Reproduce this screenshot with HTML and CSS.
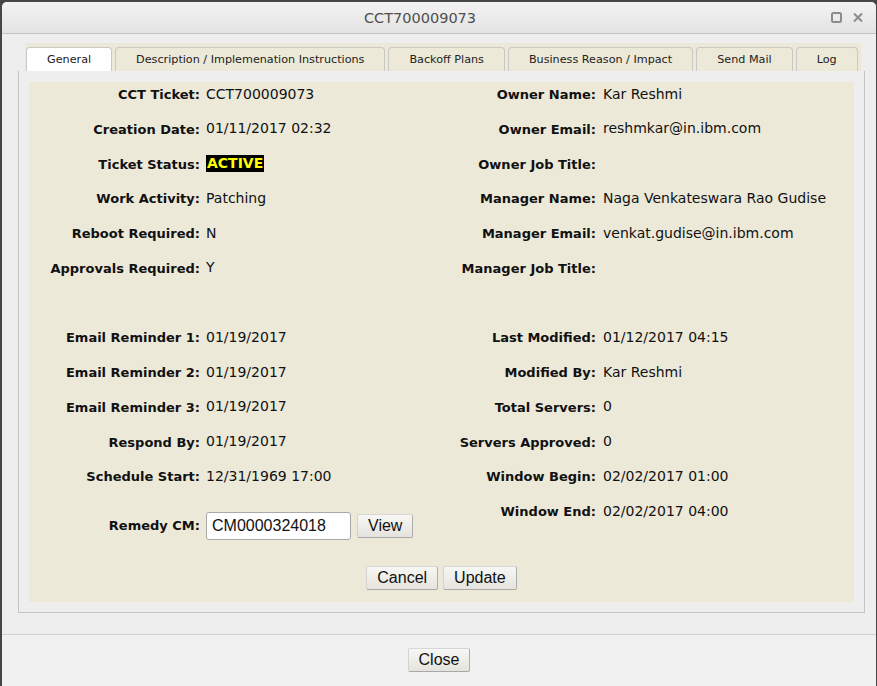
FILE: index.html
```html
<!DOCTYPE html>
<html>
<head>
<meta charset="utf-8">
<link rel="stylesheet" href="styles.css">
</head>
<body>
<div class="dialog">
  <div class="titlebar">
    <div class="title">CCT700009073</div>
    <div class="wincontrols">
      <svg class="ico" width="11" height="11" viewBox="0 0 11 11"><rect x="1" y="1" width="9" height="9" rx="1.5" fill="none" stroke="#8c8c8c" stroke-width="2"/></svg>
      <svg class="ico" width="10" height="11" viewBox="0 0 10 11"><path d="M1 1.5 L9 9.5 M9 1.5 L1 9.5" stroke="#8c8c8c" stroke-width="2" fill="none"/></svg>
    </div>
  </div>
  <div class="body">
    <div class="tabs">
      <ul class="tabnav">
        <li class="tab active">General</li>
        <li class="tab">Description / Implemenation Instructions</li>
        <li class="tab">Backoff Plans</li>
        <li class="tab">Business Reason / Impact</li>
        <li class="tab">Send Mail</li>
        <li class="tab">Log</li>
      </ul>
      <div class="panel">
        <div class="content">
          <div class="cols">
            <div class="grid left">
              <div class="lbl">CCT Ticket:</div><div class="val">CCT700009073</div>
              <div class="lbl">Creation Date:</div><div class="val">01/11/2017 02:32</div>
              <div class="lbl">Ticket Status:</div><div class="val"><span class="status">ACTIVE</span></div>
              <div class="lbl">Work Activity:</div><div class="val">Patching</div>
              <div class="lbl">Reboot Required:</div><div class="val">N</div>
              <div class="lbl">Approvals Required:</div><div class="val">Y</div>
              <div class="spacer"></div>
              <div class="lbl">Email Reminder 1:</div><div class="val">01/19/2017</div>
              <div class="lbl">Email Reminder 2:</div><div class="val">01/19/2017</div>
              <div class="lbl">Email Reminder 3:</div><div class="val">01/19/2017</div>
              <div class="lbl">Respond By:</div><div class="val">01/19/2017</div>
              <div class="lbl">Schedule Start:</div><div class="val">12/31/1969 17:00</div>
              <div class="lbl remedy-lbl">Remedy CM:</div>
              <div class="remedy-field">
                <input class="txt" type="text" value="CM0000324018">
                <button class="btn">View</button>
              </div>
            </div>
            <div class="grid right">
              <div class="lbl">Owner Name:</div><div class="val">Kar Reshmi</div>
              <div class="lbl">Owner Email:</div><div class="val">reshmkar@in.ibm.com</div>
              <div class="lbl">Owner Job Title:</div><div class="val"></div>
              <div class="lbl">Manager Name:</div><div class="val">Naga Venkateswara Rao Gudise</div>
              <div class="lbl">Manager Email:</div><div class="val">venkat.gudise@in.ibm.com</div>
              <div class="lbl">Manager Job Title:</div><div class="val"></div>
              <div class="spacer"></div>
              <div class="lbl">Last Modified:</div><div class="val">01/12/2017 04:15</div>
              <div class="lbl">Modified By:</div><div class="val">Kar Reshmi</div>
              <div class="lbl">Total Servers:</div><div class="val">0</div>
              <div class="lbl">Servers Approved:</div><div class="val">0</div>
              <div class="lbl">Window Begin:</div><div class="val">02/02/2017 01:00</div>
              <div class="lbl">Window End:</div><div class="val">02/02/2017 04:00</div>
            </div>
          </div>
          <div class="actions">
            <button class="btn">Cancel</button>
            <button class="btn">Update</button>
          </div>
        </div>
      </div>
    </div>
  </div>
  <div class="footer">
    <button class="btn">Close</button>
  </div>
</div>
</body>
</html>
```
FILE: styles.css
```css
html, body {
  margin: 0;
  padding: 0;
}
body {
  width: 877px;
  height: 686px;
  overflow: hidden;
  background: #464646;
  font-family: "DejaVu Sans", sans-serif;
  color: #111;
}
.dialog {
  margin: 2px 0 0 2px;
  width: 874px;
  height: 684px;
  background: #eeeeee;
  border-radius: 5px 5px 0 0;
  display: flex;
  flex-direction: column;
  overflow: hidden;
}
.titlebar {
  height: 31px;
  flex: none;
  border-bottom: 1px solid #c4c4c4;
  background: linear-gradient(#f3f3f3, #e3e3e3);
  display: flex;
  align-items: center;
}
.title {
  flex: 1;
  text-align: center;
  font-size: 14.5px;
  color: #4f4f4f;
  padding-left: 7px;
}
.wincontrols {
  display: flex;
  align-items: center;
  gap: 11px;
  padding-right: 13px;
}
.ico {
  display: block;
}
.body {
  flex: 1;
  padding: 9px 0 0 16px;
}
.tabs {
  width: 847px;
}
.tabnav {
  list-style: none;
  margin: 0 4px 0 7px;
  padding: 4px 0 0 1px;
  background: #ece9d8;
  display: flex;
  gap: 3px;
}
.tab {
  height: 23px;
  line-height: 23px;
  padding: 0 20px;
  border: 1px solid #c8c8c4;
  border-bottom: none;
  border-radius: 4px 4px 0 0;
  background: #ece9d8;
  font-size: 11.2px;
  color: #222;
  white-space: nowrap;
}
.tab.active {
  background: #ffffff;
}
.panel {
  border: 1px solid #c4c4c4;
  border-top: none;
  padding: 11px 10px 10px 10px;
}
.content {
  background: #ece9d9;
  padding: 3.5px 0 12px 0;
}
.cols {
  display: flex;
  align-items: flex-start;
}
.grid {
  display: grid;
  row-gap: 17.75px;
  align-items: start;
  align-content: start;
  line-height: 17px;
}
.grid.left {
  width: 411px;
  grid-template-columns: 171px auto;
  column-gap: 6px;
}
.grid.right {
  grid-template-columns: 156px auto;
  column-gap: 7px;
}
.lbl {
  font-size: 13px;
  font-weight: bold;
  text-align: right;
  white-space: nowrap;
  height: 17px;
  padding-top: 0.5px;
  box-sizing: border-box;
}
.val {
  font-size: 14px;
  white-space: nowrap;
  height: 17px;
}
.spacer {
  grid-column: 1 / span 2;
  height: 17px;
}
.status {
  display: inline-block;
  background: #000;
  color: #ffff00;
  font-weight: bold;
  padding: 0 1px;
  line-height: 17px;
}
.remedy-lbl {
  margin-top: 9.5px;
  height: 28px;
  line-height: 28px;
  padding-top: 0;
}
.remedy-field {
  margin-top: 9.5px;
  height: 28px;
  display: flex;
  align-items: center;
  gap: 6px;
}
.txt {
  box-sizing: border-box;
  width: 145px;
  height: 28px;
  margin: 0;
  padding: 0 5px;
  border: 1px solid #a9a9a9;
  border-radius: 3px;
  background: #fff;
  font-family: "Liberation Sans", Arial, sans-serif;
  font-size: 16px;
  color: #111;
}
.btn {
  box-sizing: border-box;
  height: 24px;
  margin: 0;
  padding: 0 10px;
  border: 1px solid;
  border-color: #d6d6d6 #aeaeae #a8a8a8 #d2d2d2;
  border-radius: 2px;
  background: linear-gradient(#f7f7f5, #e5e3dd);
  font-family: "Liberation Sans", Arial, sans-serif;
  font-size: 16px;
  color: #111;
  line-height: 22px;
}
.actions {
  display: flex;
  justify-content: center;
  gap: 5px;
  margin-top: 26px;
}
.footer {
  flex: none;
  box-sizing: border-box;
  height: 52px;
  border-top: 1px solid #cfcfcf;
  background: #f1f1f1;
  display: flex;
  justify-content: center;
  align-items: flex-start;
  padding-top: 13px;
}
```
